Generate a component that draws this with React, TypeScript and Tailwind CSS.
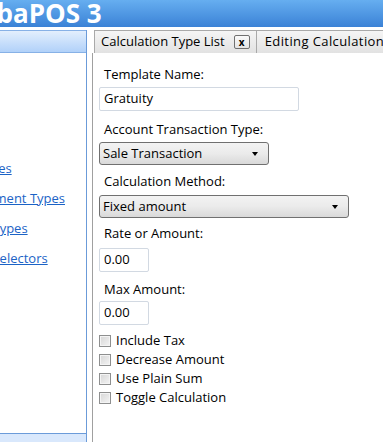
import React from 'react';

const font = { fontFamily: '"Segoe UI", "Open Sans", "Noto Sans", sans-serif' };

const links = [
  { text: 'Tax Templates', shift: 'ml-[-76px]' },
  { text: 'Payment Types', shift: 'ml-[-27px]' },
  { text: 'Calculation Types', shift: 'ml-[-78px]' },
  { text: 'Calculation Selectors', shift: 'ml-[-78px]' },
];

function Select({ value, width }: { value: string; width: string }) {
  return (
    <div
      className={`${width} h-[23px] flex items-center justify-between pl-[3px] pr-[10px] border border-[#707070] rounded-[3px] bg-gradient-to-b from-[#f3f3f3] via-[#ebebeb] to-[#d9d9d9] text-[13px] text-black`}
    >
      <span>{value}</span>
      <span className="w-0 h-0 border-l-[3.5px] border-r-[3.5px] border-t-[4px] border-l-transparent border-r-transparent border-t-black" />
    </div>
  );
}

function TextBox({ value, width }: { value: string; width: string }) {
  return (
    <div className={`${width} h-[24px] flex items-center pl-[4px] border border-[#d2d9e2] rounded-[2px] bg-white text-[13px] text-black`}>
      {value}
    </div>
  );
}

function Check({ label }: { label: string }) {
  return (
    <div className="flex items-center h-[19px] gap-[5px]">
      <span className="w-[12px] h-[12px] border border-[#8e8f8f] bg-gradient-to-br from-[#d6d6d6] to-[#f4f4f4] shadow-[inset_0_0_0_1px_#f4f4f4]" />
      <span className="text-[13px] text-black">{label}</span>
    </div>
  );
}

export default function App() {
  return (
    <div className="w-[383px] h-[442px] overflow-hidden bg-white flex flex-col" style={font}>
      {/* title bar */}
      <div className="h-[27px] shrink-0 flex items-center overflow-hidden bg-gradient-to-b from-[#66aef0] to-[#3b82d6]">
        <span className="ml-[-59px] mt-[-2px] text-[26px] font-bold text-white whitespace-nowrap leading-none">SambaPOS 3</span>
      </div>

      <div className="flex-1 flex min-h-0 pt-[3px]">
        {/* left navigation */}
        <div className="w-[87px] shrink-0 flex flex-col border-r border-[#6b9bd9] overflow-hidden">
          <div className="h-[23px] shrink-0 border-t border-b border-[#87b1e6] bg-gradient-to-b from-[#e3effd] to-[#b1d1f9]" />
          <div className="flex-1 flex flex-col pt-[106px] gap-[12px]">
            {links.map((l) => (
              <a key={l.text} className={`${l.shift} whitespace-nowrap text-[13px] leading-[18px] text-[#1b63c6] underline`}>
                {l.text}
              </a>
            ))}
          </div>
          <div className="h-[9px] shrink-0 border-t border-[#6b9bd9] bg-[#d9e8fc]" />
        </div>

        {/* tabbed document */}
        <div className="flex-1 flex flex-col min-w-0 pl-[5px]">
          <div className="h-[23px] shrink-0 flex items-end pl-[2px] overflow-hidden">
            <div className="h-[23px] shrink-0 flex items-center gap-[9px] pl-[6px] pr-[6px] border border-b-0 border-[#a9a9a9] bg-gradient-to-b from-[#f5f5f5] to-[#e2e2e2] text-[13px] text-black whitespace-nowrap">
              <span>Calculation Type List</span>
              <span className="w-[16px] h-[14px] flex items-center justify-center border border-[#707070] rounded-[2px] bg-gradient-to-b from-[#fafafa] to-[#e4e4e4] text-[10px] font-bold leading-none">x</span>
            </div>
            <div className="h-[23px] shrink-0 flex items-center pl-[8px] pr-[6px] border border-b-0 border-l-0 border-[#a9a9a9] bg-gradient-to-b from-[#f5f5f5] to-[#e2e2e2] text-[13px] text-black whitespace-nowrap">
              <span className="tracking-[0.4px]">Editing Calculation Type</span>
            </div>
          </div>

          <div className="flex-1 border-l border-[#a0a0a0] flex flex-col pl-[6px] pt-[12px] text-[13px] text-black">
            <div className="h-[20px] flex items-center pl-[5px]">Template Name:</div>
            <div className="mt-[2px]"><TextBox value="Gratuity" width="w-[200px]" /></div>
            <div className="h-[20px] mt-[9px] flex items-center pl-[5px]">Account Transaction Type:</div>
            <div className="mt-[2px]"><Select value="Sale Transaction" width="w-[170px]" /></div>
            <div className="h-[20px] mt-[7px] flex items-center pl-[5px]">Calculation Method:</div>
            <div className="mt-[3px]"><Select value="Fixed amount" width="w-[250px]" /></div>
            <div className="h-[20px] mt-[6px] flex items-center pl-[5px]">Rate or Amount:</div>
            <div className="mt-[4px]"><TextBox value="0.00" width="w-[50px]" /></div>
            <div className="h-[20px] mt-[8px] flex items-center pl-[5px]">Max Amount:</div>
            <div className="mt-[1px]"><TextBox value="0.00" width="w-[50px]" /></div>
            <div className="mt-[6px] flex flex-col">
              <Check label="Include Tax" />
              <Check label="Decrease Amount" />
              <Check label="Use Plain Sum" />
              <Check label="Toggle Calculation" />
            </div>
          </div>
        </div>
      </div>
    </div>
  );
}
